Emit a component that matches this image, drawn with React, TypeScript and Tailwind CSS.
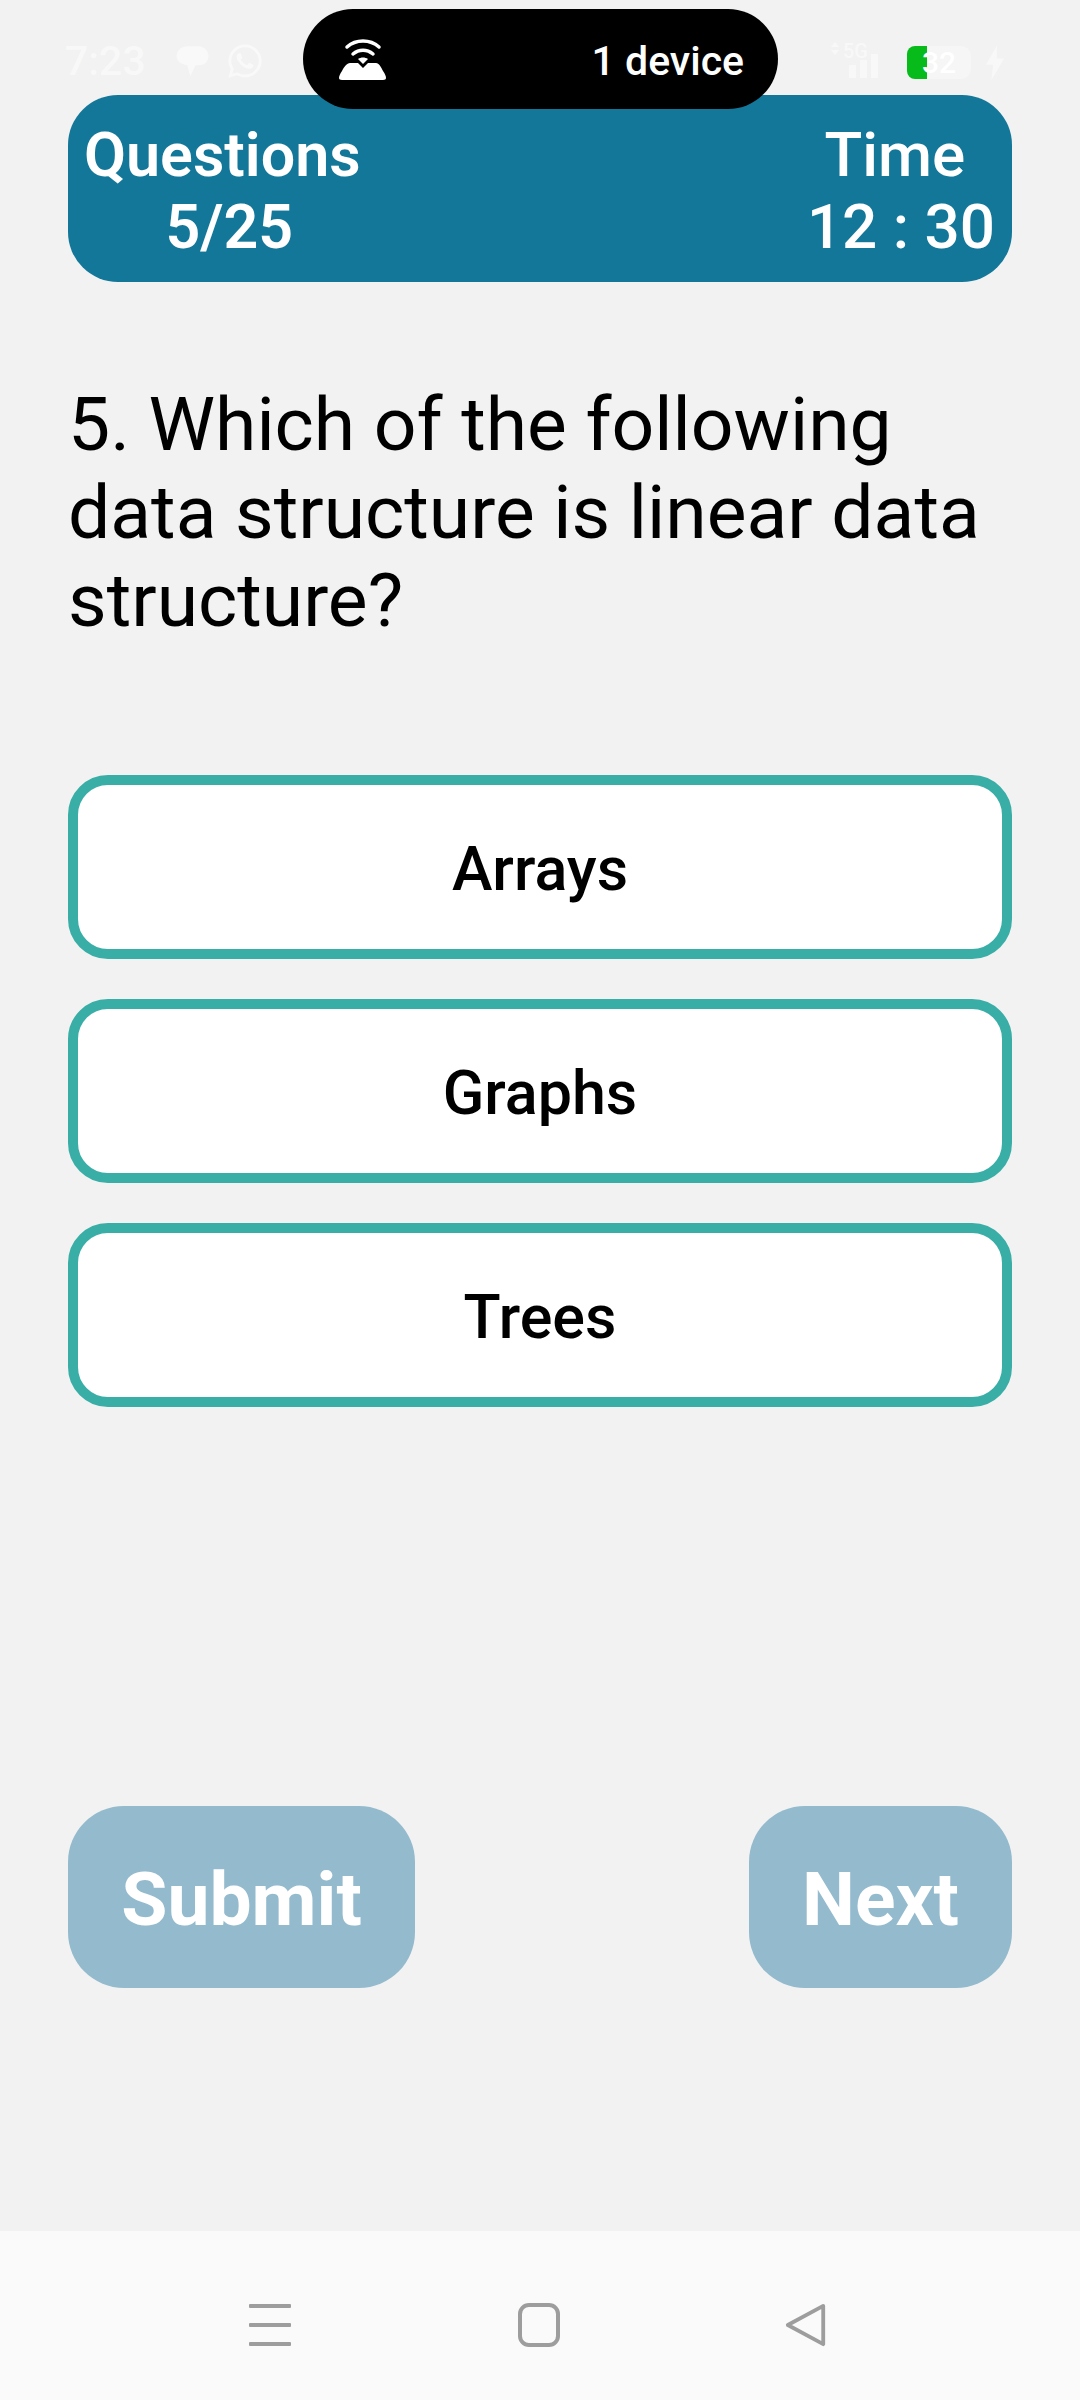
import { FaWhatsapp } from "react-icons/fa";

function Option({ label }: { label: string }) {
  return (
    <div className="flex h-[184px] items-center justify-center rounded-[40px] border-[10px] border-[#38aea6] bg-white pt-[6px] text-[61px] font-medium text-black">
      {label}
    </div>
  );
}

export default function App() {
  return (
    <div className="relative flex h-[2400px] w-[1080px] flex-col overflow-hidden bg-[#f2f2f2] font-['Roboto',sans-serif]">
      {/* status bar */}
      <div className="flex h-[95px] items-start justify-between pl-[65px] pr-[75px] pt-[38px] text-[#f8f8f8]">
        <div className="flex items-center">
          <span className="text-[41px] font-medium leading-[46px]">7:23</span>
          <svg className="ml-[29px]" width="35" height="34" viewBox="0 0 32 32" fill="#f9f9f9">
            <path d="M12 2h9c6 0 10 4 10 9s-3 9-9 9h-3l-5 10-3-10C5 19 1 16 1 11s5-9 11-9z" />
          </svg>
          <FaWhatsapp className="ml-[16px]" size={38} color="#f9f9f9" />
        </div>
        <div className="flex items-start">
          <div className="relative h-[40px] w-[52px]">
            <span className="absolute left-[14px] top-[3px] text-[20px] font-medium leading-none text-[#f8f8f8]">5G</span>
            <svg width="52" height="40" viewBox="0 0 52 40" fill="#f8f8f8" className="absolute left-0 top-0">
              <path d="M2 9l4-5 4 5zM2 12l4 5 4-5z" />
              <rect x="20" y="27" width="7" height="13" />
              <rect x="31" y="22" width="7" height="18" />
              <rect x="42" y="16" width="7" height="24" />
            </svg>
          </div>
          <div className="relative ml-[26px] mt-[8px] flex h-[33px] w-[64px] items-center justify-center rounded-[10px] bg-[#f6f6f6] text-[30px] font-medium leading-none text-white">
            <div className="absolute bottom-0 left-0 top-0 w-[20px] rounded-l-[8px] bg-[#06bb1a]" />
            <span className="relative">32</span>
          </div>
          <svg width="20" height="36" viewBox="0 0 22 38" fill="#f8f8f8" className="ml-[14px] mt-[7px]">
            <path d="M13 0L1 21h8l-2 17 14-24h-8z" />
          </svg>
        </div>
      </div>

      {/* hotspot pill */}
      <div className="absolute left-[303px] top-[9px] flex h-[100px] w-[475px] items-center justify-between rounded-[50px] bg-black pl-[34px] pr-[34px] text-white">
        <svg width="52" height="42" viewBox="0 0 52 42" fill="none">
          <path d="M10 9C19 1 33 1 42 9" stroke="#fff" strokeWidth="3.5" strokeLinecap="round" />
          <path d="M16 16c6-5 14-5 20 0" stroke="#fff" strokeWidth="3.5" strokeLinecap="round" />
          <path d="M21 21c3-2 7-2 10 0l-5 5z" fill="#fff" />
          <path d="M13 25h8l5 5 5-5h8c3 0 5 4 7 8 2 3 3 5 3 7 0 1-1 2-3 2H5c-2 0-3-1-3-2 0-2 1-4 3-7 2-4 5-8 8-8z" fill="#fff" />
        </svg>
        <span className="pt-[4px] text-[41px] font-medium leading-none">1 device</span>
      </div>

      {/* header */}
      <div className="mx-[68px] flex h-[187px] items-center justify-between rounded-[50px] bg-[#137799] pl-[16px] pr-[17px] pt-[5px] text-[61px] leading-[72px] text-white">
        <div className="flex flex-col items-center font-semibold">
          <span>Questions</span>
          <span className="pl-[14px]">5/25</span>
        </div>
        <div className="flex flex-col items-center text-[62px] font-medium">
          <span className="pr-[12px]">Time</span>
          <span>12 : 30</span>
        </div>
      </div>

      {/* question */}
      <p className="mx-[68px] mt-[98px] text-[75px] leading-[88px] text-black">
        5. Which of the following data structure is linear data structure?
      </p>

      {/* options */}
      <div className="mx-[68px] mt-[131px] flex flex-col gap-[40px]">
        <Option label="Arrays" />
        <Option label="Graphs" />
        <Option label="Trees" />
      </div>

      {/* actions */}
      <div className="mx-[68px] mt-[399px] flex justify-between text-[75px] font-bold text-white">
        <div className="flex h-[182px] w-[347px] items-center justify-center rounded-[56px] bg-[#93bacd] pt-[5px]">Submit</div>
        <div className="flex h-[182px] w-[263px] items-center justify-center rounded-[56px] bg-[#93bacd] pt-[5px]">Next</div>
      </div>

      {/* nav bar */}
      <div className="mt-auto flex h-[169px] items-center justify-center bg-[#fafafa] pr-[4px] pt-[18px]">
        <div className="flex items-center">
          <svg width="42" height="44" viewBox="0 0 42 44" fill="#9d9d9d">
            <rect x="0" y="1" width="42" height="4" rx="1" />
            <rect x="0" y="20" width="42" height="4" rx="1" />
            <rect x="0" y="39" width="42" height="4" rx="1" />
          </svg>
          <svg className="ml-[227px]" width="42" height="44" viewBox="0 0 42 44" fill="none" stroke="#9d9d9d" strokeWidth="4">
            <rect x="2" y="2" width="38" height="40" rx="9" />
          </svg>
          <svg className="ml-[225px]" width="42" height="44" viewBox="0 0 42 46" fill="none" stroke="#9d9d9d" strokeWidth="4" strokeLinejoin="round">
            <path d="M39 3L2 23l37 20z" />
          </svg>
        </div>
      </div>
    </div>
  );
}
